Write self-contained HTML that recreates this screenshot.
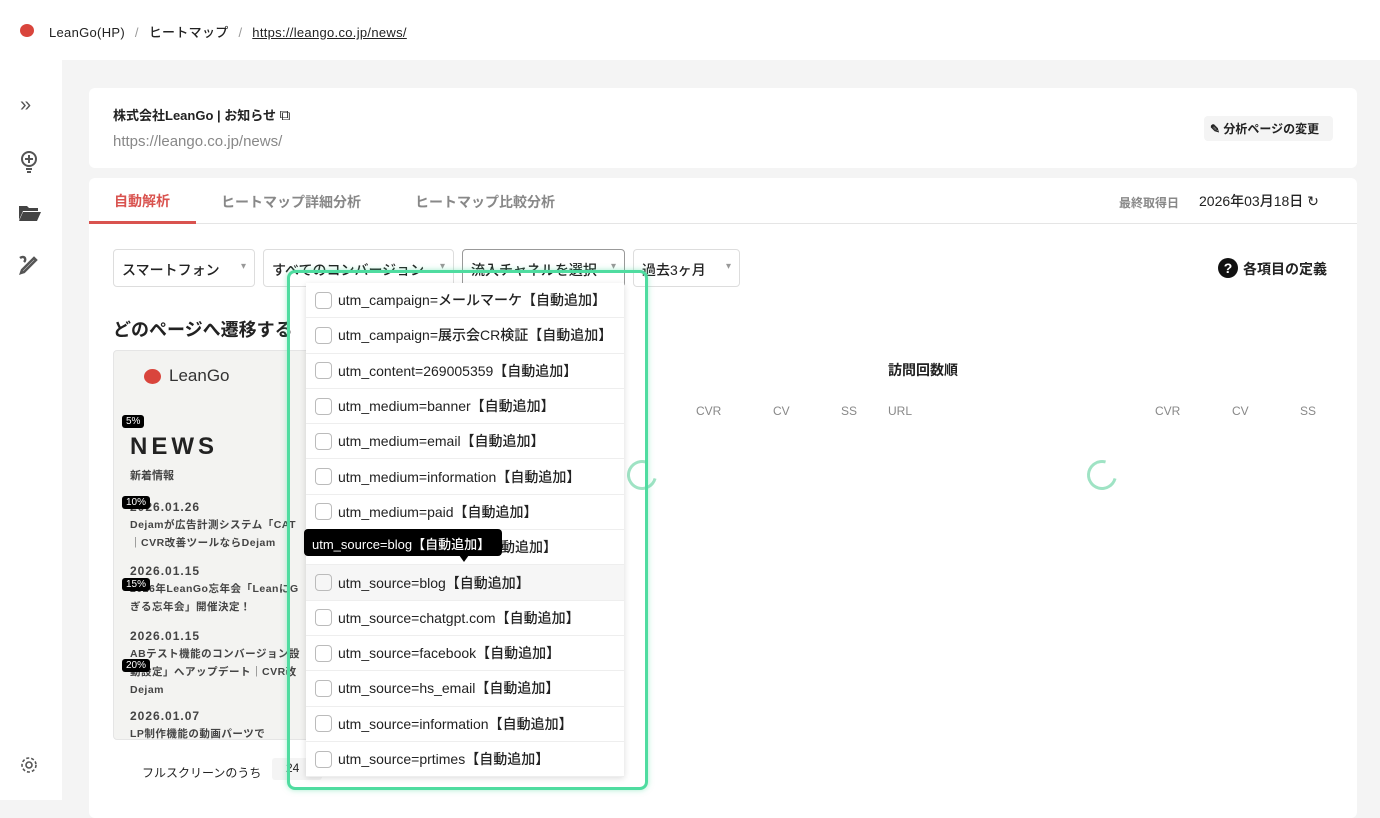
<!DOCTYPE html>
<html><head><meta charset="utf-8"><style>
*{box-sizing:border-box;margin:0;padding:0}
body{width:1380px;height:818px;overflow:hidden;background:#f4f4f4;font-family:"Liberation Sans","Noto Sans CJK JP",sans-serif;color:#222;position:relative}
.abs{position:absolute}
.top{left:0;top:0;width:1380px;height:60px;background:#fff}
.side{left:0;top:60px;width:62px;height:740px;background:#fff}
.card{background:#fff;border-radius:6px}
.sel{position:absolute;top:249px;height:38px;border:1px solid #ddd;border-radius:4px;background:#fff;font-size:14px;padding:10px 8px;font-weight:500}
.sel:after{content:"▾";position:absolute;right:8px;top:11px;font-size:10px;color:#999}
.row{height:35.3px;border-bottom:1px solid #eee;display:flex;align-items:center;padding-left:9px;font-size:14px;color:#222;font-weight:500}
.cb{width:17px;height:17px;border:1px solid #bbb;border-radius:4px;margin-right:6px;flex:none}
.tag{position:absolute;left:122px;background:#000;color:#fff;font-size:10px;padding:1px 4px;border-radius:3px}
.th{position:absolute;top:404px;font-size:12px;color:#888}
.nw{position:absolute;left:16px;font-size:12px;color:#444;letter-spacing:1px;line-height:17px;font-weight:700;white-space:nowrap}
.nw span{font-size:10.5px;font-weight:700;letter-spacing:.5px}
</style></head><body>
<div class="abs top"></div>
<div class="abs" style="left:20px;top:24px;width:14px;height:13px;background:#d9453c;border-radius:50%"></div>
<div class="abs" style="left:49px;top:22px;font-size:13px;font-weight:500;letter-spacing:.3px">LeanGo(HP) <span style="color:#999;margin:0 6px">/</span> ヒートマップ <span style="color:#999;margin:0 6px">/</span> <u>https://leango.co.jp/news/</u></div>
<div class="abs side"></div>
<div class="abs" style="left:20px;top:94px;font-size:20px;color:#555">»</div>
<svg class="abs" style="left:19px;top:150px" width="20" height="24" viewBox="0 0 20 24"><circle cx="10" cy="9" r="7" fill="none" stroke="#555" stroke-width="2"/><path d="M10 5v8M6 9h8M7 19h6M8 22h4" stroke="#555" stroke-width="2"/></svg>
<svg class="abs" style="left:19px;top:204px" width="22" height="17" viewBox="0 0 22 17"><path d="M0 2h8l2 2h9v3H4L0 16z M4 8h18l-4 9H0z" fill="#444"/></svg>
<svg class="abs" style="left:19px;top:255px" width="20" height="20" viewBox="0 0 20 20"><path d="M2 18l3-1 12-12-2-2L3 15z M1 3c4-3 7 1 4 4" fill="none" stroke="#555" stroke-width="2.5"/></svg>
<svg class="abs" style="left:20px;top:756px" width="18" height="18" viewBox="0 0 18 18"><circle cx="9" cy="9" r="3" fill="none" stroke="#555" stroke-width="1.6"/><circle cx="9" cy="9" r="7" fill="none" stroke="#555" stroke-width="1.6" stroke-dasharray="3 2"/></svg>

<div class="abs card" style="left:89px;top:88px;width:1268px;height:80px"></div>
<div class="abs" style="left:113px;top:105px;font-size:13px;font-weight:700">株式会社LeanGo | お知らせ <span style="font-weight:400;font-size:15px">⧉</span></div>
<div class="abs" style="left:113px;top:133px;font-size:15px;color:#888">https://leango.co.jp/news/</div>
<div class="abs" style="left:1204px;top:116px;width:129px;height:25px;background:#f4f4f4;border-radius:4px;font-size:12px;font-weight:700;padding:4px 6px">✎ 分析ページの変更</div>

<div class="abs card" style="left:89px;top:178px;width:1268px;height:640px"></div>
<div class="abs" style="left:89px;top:223px;width:1268px;height:1px;background:#e5e5e5"></div>
<div class="abs" style="left:89px;top:221px;width:107px;height:3px;background:#d9534f"></div>
<div class="abs" style="left:114px;top:191px;font-size:14px;font-weight:700;color:#d9534f">自動解析</div>
<div class="abs" style="left:221px;top:192px;font-size:14px;font-weight:700;color:#888">ヒートマップ詳細分析</div>
<div class="abs" style="left:415px;top:192px;font-size:14px;font-weight:700;color:#888">ヒートマップ比較分析</div>
<div class="abs" style="left:1119px;top:194px;font-size:12px;color:#888;font-weight:700">最終取得日</div>
<div class="abs" style="left:1199px;top:191px;font-size:14px;font-weight:500">2026年03月18日 ↻</div>

<div class="sel" style="left:113px;width:142px">スマートフォン</div>
<div class="sel" style="left:263px;width:191px">すべてのコンバージョン</div>
<div class="sel" style="left:462px;width:163px;border-color:#999">流入チャネルを選択</div>
<div class="sel" style="left:633px;width:107px">過去3ヶ月</div>
<div class="abs" style="left:1218px;top:258px;width:20px;height:20px;border-radius:50%;background:#111;color:#fff;font-size:14px;font-weight:700;text-align:center;line-height:20px">?</div>
<div class="abs" style="left:1243px;top:259px;font-size:14px;font-weight:700">各項目の定義</div>

<div class="abs" style="left:113px;top:316px;font-size:18px;font-weight:700">どのページへ遷移する</div>
<div class="abs" style="left:113px;top:350px;width:200px;height:390px;background:#f3f3f1;border:1px solid #e5e5e5;border-radius:4px;overflow:hidden">
 <div class="abs" style="left:30px;top:18px;width:17px;height:15px;background:#d9453c;border-radius:50%"></div>
 <div class="abs" style="left:55px;top:15px;font-size:17px;color:#333">LeanGo</div>
 <div class="abs" style="left:16px;top:82px;font-size:24px;font-weight:700;letter-spacing:4px">NEWS</div>
 <div class="abs" style="left:16px;top:116px;font-size:11px;font-weight:700;color:#444">新着情報</div>
 <div class="nw" style="top:148px">2026.01.26<br><span>Dejamが広告計測システム「CAT<br>｜CVR改善ツールならDejam</span></div>
 <div class="nw" style="top:212px">2026.01.15<br><span>2026年LeanGo忘年会「LeanにG<br>ぎる忘年会」開催決定！</span></div>
 <div class="nw" style="top:277px">2026.01.15<br><span>ABテスト機能のコンバージョン設<br>動設定」へアップデート｜CVR改<br>Dejam</span></div>
 <div class="nw" style="top:357px">2026.01.07<br><span>LP制作機能の動画パーツで</span></div>
</div>
<div class="tag" style="top:415px">5%</div>
<div class="tag" style="top:496px">10%</div>
<div class="tag" style="top:578px">15%</div>
<div class="tag" style="top:659px">20%</div>
<div class="abs" style="left:142px;top:764px;font-size:12px">フルスクリーンのうち</div>
<div class="abs" style="left:272px;top:758px;width:50px;height:22px;background:#f4f4f4;border-radius:3px;font-size:12px;padding:3px 14px">24</div>

<div class="abs" style="left:888px;top:360px;font-size:14px;font-weight:700">訪問回数順</div>
<div class="th" style="left:696px">CVR</div><div class="th" style="left:773px">CV</div><div class="th" style="left:841px">SS</div><div class="th" style="left:888px">URL</div>
<div class="th" style="left:1155px">CVR</div><div class="th" style="left:1232px">CV</div><div class="th" style="left:1300px">SS</div>
<div class="abs" style="left:1087px;top:460px;width:30px;height:30px;border:3px solid #9fe3c4;border-right-color:transparent;border-radius:50%;transform:rotate(-30deg)"></div>
<div class="abs" style="left:627px;top:460px;width:30px;height:30px;border:3px solid #9fe3c4;border-right-color:transparent;border-radius:50%;transform:rotate(-30deg)"></div>

<div class="abs" style="left:306px;top:283px;width:318px;height:493px;background:#fff;box-shadow:0 2px 6px rgba(0,0,0,.15)">
<div class="row"><span class="cb"></span>utm_campaign=メールマーケ【自動追加】</div>
<div class="row"><span class="cb"></span>utm_campaign=展示会CR検証【自動追加】</div>
<div class="row"><span class="cb"></span>utm_content=269005359【自動追加】</div>
<div class="row"><span class="cb"></span>utm_medium=banner【自動追加】</div>
<div class="row"><span class="cb"></span>utm_medium=email【自動追加】</div>
<div class="row"><span class="cb"></span>utm_medium=information【自動追加】</div>
<div class="row"><span class="cb"></span>utm_medium=paid【自動追加】</div>
<div class="row"><span class="cb"></span>utm_medium=release【自動追加】</div>
<div class="row" style="background:#f6f6f6"><span class="cb"></span>utm_source=blog【自動追加】</div>
<div class="row"><span class="cb"></span>utm_source=chatgpt.com【自動追加】</div>
<div class="row"><span class="cb"></span>utm_source=facebook【自動追加】</div>
<div class="row"><span class="cb"></span>utm_source=hs_email【自動追加】</div>
<div class="row"><span class="cb"></span>utm_source=information【自動追加】</div>
<div class="row"><span class="cb"></span>utm_source=prtimes【自動追加】</div>
</div>
<div class="abs" style="left:304px;top:529px;width:198px;height:27px;background:#000;border-radius:4px;color:#fff;font-size:13px;padding:5px 8px;font-weight:500">utm_source=blog【自動追加】</div>
<div class="abs" style="left:459px;top:555px;width:0;height:0;border:5px solid transparent;border-top:7px solid #000"></div>
<div class="abs" style="left:287px;top:270px;width:361px;height:520px;border:3px solid #4fdca0;border-radius:8px;box-shadow:0 0 6px rgba(79,220,160,.5)"></div>
</body></html>
